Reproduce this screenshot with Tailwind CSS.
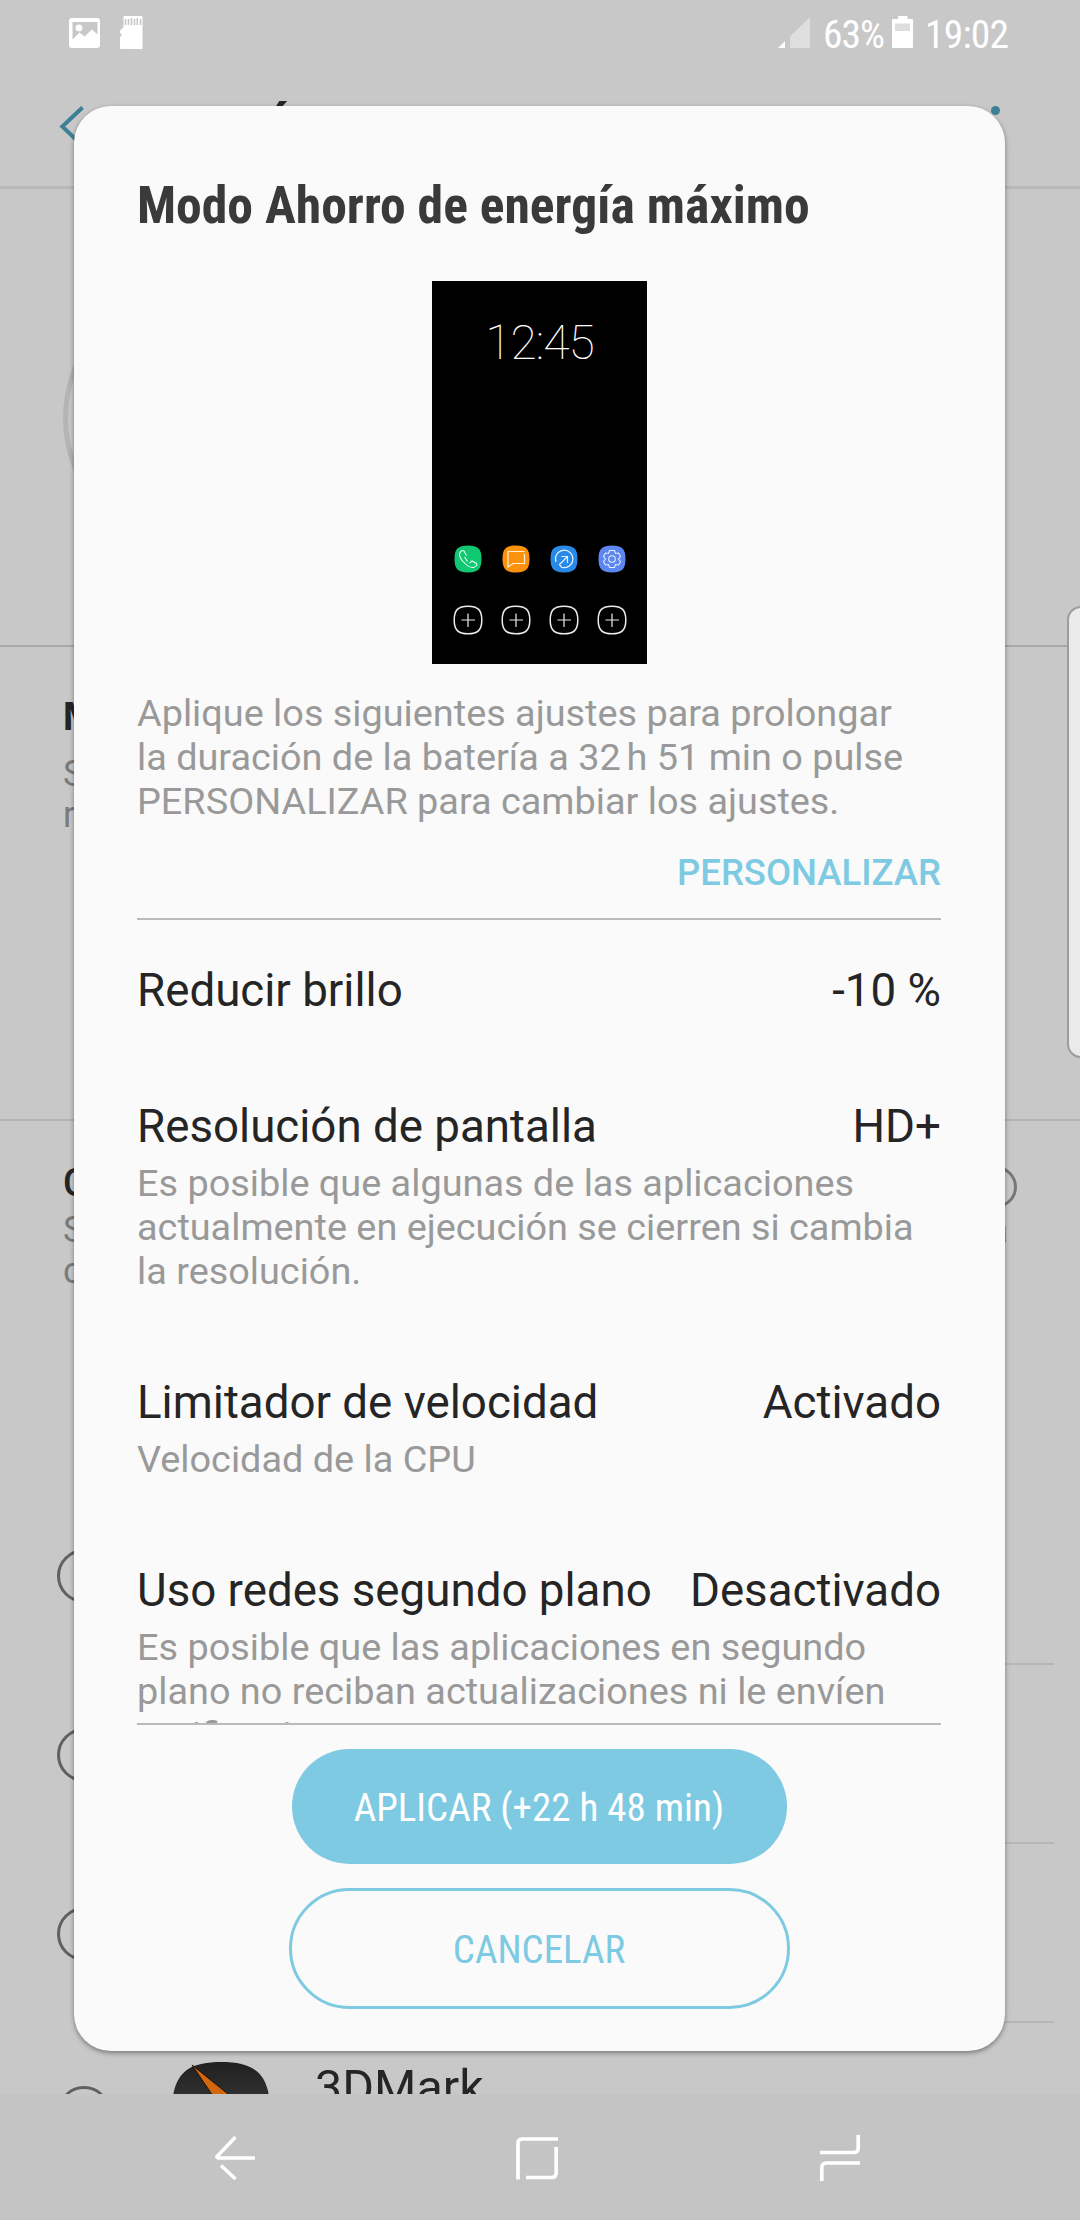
<!DOCTYPE html>
<html lang="es">
<head>
<meta charset="utf-8">
<title>Modo Ahorro de energía máximo</title>
<script src="https://cdn.jsdelivr.net/npm/@tailwindcss/browser@4"></script>
</head>
<body class="relative h-[2220px] w-[1080px] overflow-hidden bg-[#c8c8c8] font-['Roboto',sans-serif] text-[#252525]">

<!-- Settings screen behind the dialog -->
<div class="flex h-[2094px] flex-col overflow-hidden">
  <header class="flex h-[72px] shrink-0 items-start justify-between pl-[69px] pr-[71px]">
    <div class="flex items-start gap-[19px] pt-4">
      <svg class="mt-px h-8 w-8" viewBox="0 0 32 32"><path fill="#fff" fill-rule="evenodd" d="M3 1h25a3 3 0 0 1 3 3v24a3 3 0 0 1-3 3H3a3 3 0 0 1-3-3V4a3 3 0 0 1 3-3ZM3.500 5v17.500l7-7 5 4 7.500-7 5.500 5V5ZM10 7.500a3.400 3.400 0 1 1 0 6.800 3.400 3.400 0 0 1 0-6.800Z"/></svg>
      <svg class="h-[33px] w-[23px]" viewBox="0 0 23 33"><path fill="#fff" d="M4 0h17.500a1 1 0 0 1 1 1v31a1 1 0 0 1-1 1H1a1 1 0 0 1-1-1V21l1.500-1.500V18L0 17v-2.500L3.500 11V1Z"/><path stroke="#c8c8c8" stroke-width="1.600" d="M5.500 3v6M8.500 3v6M11.500 2v7M14.500 3v6M17.300 2v7M20.500 3v6"/></svg>
    </div>
    <div class="flex items-start pt-[11px] text-[39.500px] leading-[46px] text-white">
      <svg class="mr-[13px] mt-[5px] h-8 w-8" viewBox="0 0 32 32"><path fill="#fff" d="M0 32l7-7v7Z"/><path fill="#dedede" d="M12 32V20.500L32 1v31Z"/></svg>
      <span class="mt-px w-[61px] whitespace-nowrap font-['Roboto_Condensed','Roboto'] tracking-[-1px] font-stretch-condensed">63%</span>
      <svg class="ml-2 mt-[5px] h-8 w-[21px]" viewBox="0 0 21 32"><path fill="#fff" d="M6 0h9.500v3H20a1 1 0 0 1 1 1v27a1 1 0 0 1-1 1H1a1 1 0 0 1-1-1V4a1 1 0 0 1 1-1h5Z"/><path fill="#dedede" d="M3 7.500h15V15H3Z"/></svg>
      <span class="ml-[12px] mt-px w-[84px] whitespace-nowrap font-['Roboto_Condensed','Roboto'] tracking-[-0.8px] font-stretch-condensed">19:02</span>
    </div>
  </header>
  <div class="flex h-[117px] shrink-0 items-start border-b-[3px] border-[#b9b9b9] pl-[59px] pr-[80px] pt-[34px]">
    <svg class="h-10 w-7" viewBox="0 0 28 40"><path fill="none" stroke="#3d7f96" stroke-width="4" d="M23.500 1.500L3.300 20.500L23.500 39.700"/></svg>
    <span class="-mt-[5px] ml-[47px] font-['Roboto_Condensed','Roboto'] text-[51px] font-bold leading-[60px] font-stretch-condensed">BATERÍA</span>
    <span class="ml-auto h-[9px] w-[9px] rounded-full bg-[#3d7f96]"></span>
  </div>
  <section class="h-[458px] shrink-0 border-b-2 border-[#a8a8a8] pl-[63px] pt-[91px]">
    <div class="h-[276px] w-[276px] rounded-full border-[5px] border-[#b4b4b4]"></div>
  </section>
  <section class="h-[474px] shrink-0 border-b-2 border-[#b4b4b4] pl-[63px] pt-[45px]">
    <h2 class="text-[38px] font-bold leading-[50px]">M</h2>
    <p class="mt-3 text-[36px] leading-[41px] text-[#7b7b7b]">S<br>r</p>
  </section>
  <section class="h-[365px] shrink-0 pl-[63px] pt-[37px]">
    <div class="flex h-[50px] items-center justify-between pr-[63px]">
      <h2 class="text-[38px] font-medium leading-[50px]">C</h2>
      <span class="mt-2 h-[42px] w-[42px] rounded-full border-[3px] border-[#777]"></span>
    </div>
    <div class="mt-0.5 flex justify-between pr-[72px] text-[36px] leading-[41px] text-[#7b7b7b]"><span>S<br>c</span><span>a</span></div>
  </section>
  <section class="flex flex-col pl-[57px] pr-[26px]">
    <div class="flex h-[179px] items-center gap-[61px]"><span class="h-[54px] w-[54px] rounded-full border-[3px] border-[#606060]"></span><span class="h-full flex-1 border-b-2 border-[#b6b6b6]"></span></div>
    <div class="flex h-[179px] items-center gap-[61px]"><span class="h-[54px] w-[54px] rounded-full border-[3px] border-[#606060]"></span><span class="h-full flex-1 border-b-2 border-[#b6b6b6]"></span></div>
    <div class="flex h-[179px] items-center gap-[61px]"><span class="h-[54px] w-[54px] rounded-full border-[3px] border-[#606060]"></span><span class="h-full flex-1 border-b-2 border-[#b6b6b6]"></span></div>
    <div class="flex h-[179px] items-center">
      <span class="h-[54px] w-[54px] rounded-full border-[3px] border-[#606060]"></span>
      <svg class="-mt-[3px] ml-[61px] h-[98px] w-[98px]" viewBox="0 0 98 98"><defs><linearGradient id="g" x2="0" y2="1"><stop stop-color="#202020"/><stop offset=".4" stop-color="#333"/></linearGradient></defs><path fill="url(#g)" d="M49 0C83 0 98 12 98 49S83 98 49 98 0 86 0 49 15 0 49 0Z"/><path fill="#d3670f" stroke="#1b120c" d="M20 3L56 32L70 52L41 34Z"/></svg>
      <span class="-mt-[50px] ml-[45px] text-[48.500px] leading-[54px]">3DMark</span>
    </div>
  </section>
</div>

<!-- Edge panel handle -->
<div class="absolute left-[1067px] top-[606px] h-[452px] w-[40px] rounded-[14px] border-2 border-[#9c9c9c] bg-[#eaeaea]"></div>

<!-- Navigation bar -->
<nav class="flex h-[126px] items-start bg-[#c4c4c4] pl-[213px] pt-10">
  <svg class="h-12 w-12" viewBox="0 0 48 48" fill="none" stroke="#fff" stroke-width="3.500"><path d="M42 24H5Q2.500 23 5 21.500L22.500 3"/><path d="M8 31.500L22.500 45"/></svg>
  <svg class="ml-[252px] h-12 w-12" viewBox="0 0 48 48" fill="none" stroke="#fff" stroke-width="3.700"><path d="M5 45.500V9.500Q5 5 9.500 5H45"/><path d="M43.200 13V38.500Q43.200 43.500 38.500 43.500H13"/></svg>
  <svg class="ml-[257px] h-12 w-12" viewBox="0 0 48 48" fill="none" stroke="#fff" stroke-width="3.700"><path d="M2 18.500H35.500Q40.200 18.500 40.200 14V1"/><path d="M42 29H8.500Q3.800 29 3.800 34V47"/></svg>
</nav>

<!-- Dialog -->
<main class="absolute left-[74px] top-[106px] flex h-[1945px] w-[931px] flex-col rounded-[37px] bg-[#fafafa] pl-[63px] pr-16 pt-[70px] shadow-[0_2px_5px_rgba(0,0,0,0.4)]">
  <h1 class="whitespace-nowrap font-['Roboto_Condensed','Roboto'] text-[51.600px] font-bold leading-[60px] text-[#3a3a3a] font-stretch-condensed">Modo Ahorro de energía máximo</h1>
  <div class="ml-[295px] mt-[45px] flex h-[383px] w-[215px] flex-col bg-black pt-[34px]">
    <div class="text-center text-[48px] font-thin leading-[56px] tracking-[-1px] text-white">12:45</div>
    <div class="mt-[174px] flex justify-between px-[21.500px]">
      <svg class="h-[28px] w-[28px]" viewBox="0 0 28 28" fill="none"><path fill="#10c872" d="M14 .5C24 .5 27.500 4 27.500 14S24 27.500 14 27.500.5 24 .5 14 4 .5 14 .5Z"/><path stroke="#eafff4" stroke-width="1.100" d="M12.500 10.500L10 6Q8.500 4.500 6.500 7Q3.500 10 9 16.500Q15 23 19.500 22.500Q24 20.500 22.500 18.500L18 16L15.500 18M13.500 16.500L10.500 12"/></svg>
      <svg class="h-[28px] w-[28px]" viewBox="0 0 28 28" fill="none"><path fill="#fc920c" d="M14 .5C24 .5 27.500 4 27.500 14S24 27.500 14 27.500.5 24 .5 14 4 .5 14 .5Z"/><path stroke="#fff0d5" stroke-width="1.200" d="M22.500 9V18.500H11L6 22V6.500H22.500"/></svg>
      <svg class="h-[28px] w-[28px]" viewBox="0 0 28 28" fill="none"><path fill="#2889e6" d="M14 .5C24 .5 27.500 4 27.500 14S24 27.500 14 27.500.5 24 .5 14 4 .5 14 .5Z"/><path stroke="#e5f3ff" stroke-width="1.200" d="M6 17A8.700 8.700 0 1 1 11.500 22.200L9.500 19.500L17.500 11.500M11.500 11.500H17.500V18"/></svg>
      <svg class="h-[28px] w-[28px]" viewBox="0 0 28 28" fill="none"><path fill="#5d87f0" d="M14 .5C24 .5 27.500 4 27.500 14S24 27.500 14 27.500.5 24 .5 14 4 .5 14 .5Z"/><g stroke="#e5ecff" stroke-width="1.100"><circle cx="14" cy="14" r="3.300"/><path d="M11.500 5.500H16.500L17.500 8.500L20.500 8L22.500 11.500L20.500 14L22.500 16.500L20.500 20L17.500 19.500L16.500 22.500H11.500L10.500 19.500L7.500 20L5.500 16.500L7.500 14L5.500 11.500L7.500 8L10.500 8.500Z"/></g></svg>
    </div>
    <div class="mt-[32px] flex justify-between px-[20.500px]">
      <svg class="h-[30px] w-[30px]" viewBox="0 0 30 30" fill="none" stroke="#ececec"><path stroke-width="1.500" d="M15 1.200C25 1.200 28.800 5 28.800 15S25 28.800 15 28.800 1.200 25 1.200 15 5 1.200 15 1.200Z"/><path stroke-width="1.200" d="M15 8.500V22M8.500 15H22"/></svg>
      <svg class="h-[30px] w-[30px]" viewBox="0 0 30 30" fill="none" stroke="#ececec"><path stroke-width="1.500" d="M15 1.200C25 1.200 28.800 5 28.800 15S25 28.800 15 28.800 1.200 25 1.200 15 5 1.200 15 1.200Z"/><path stroke-width="1.200" d="M15 8.500V22M8.500 15H22"/></svg>
      <svg class="h-[30px] w-[30px]" viewBox="0 0 30 30" fill="none" stroke="#ececec"><path stroke-width="1.500" d="M15 1.200C25 1.200 28.800 5 28.800 15S25 28.800 15 28.800 1.200 25 1.200 15 5 1.200 15 1.200Z"/><path stroke-width="1.200" d="M15 8.500V22M8.500 15H22"/></svg>
      <svg class="h-[30px] w-[30px]" viewBox="0 0 30 30" fill="none" stroke="#ececec"><path stroke-width="1.500" d="M15 1.200C25 1.200 28.800 5 28.800 15S25 28.800 15 28.800 1.200 25 1.200 15 5 1.200 15 1.200Z"/><path stroke-width="1.200" d="M15 8.500V22M8.500 15H22"/></svg>
    </div>
  </div>
  <p class="mt-[27px] whitespace-nowrap text-[37.850px] leading-[44px] text-[#999]">Aplique los siguientes ajustes para prolongar<br>la duración de la batería a <span class="[word-spacing:-3.500px]">32 h</span> 51 min o pulse<br>PERSONALIZAR para cambiar los ajustes.</p>
  <button class="mt-7 self-end text-[36.500px] font-medium leading-[44px] text-[#7dcae2]">PERSONALIZAR</button>
  <div class="mt-[23px] h-[807px] shrink-0 overflow-hidden border-y-2 border-[#bababa] whitespace-nowrap">
    <div class="mt-11 flex justify-between text-[45.700px] leading-[54px]"><span>Reducir brillo</span><span>-10 %</span></div>
    <div class="mt-[82px] flex justify-between text-[45.700px] leading-[54px]"><span>Resolución de pantalla</span><span>HD+</span></div>
    <p class="mt-[7px] text-[37.850px] leading-[44px] text-[#999]">Es posible que algunas de las aplicaciones<br>actualmente en ejecución se cierren si cambia<br>la resolución.</p>
    <div class="mt-[83px] flex justify-between text-[45.700px] leading-[54px]"><span>Limitador de velocidad</span><span>Activado</span></div>
    <p class="mt-[7px] text-[37.850px] leading-[44px] text-[#999]">Velocidad de la CPU</p>
    <div class="mt-[83px] flex justify-between text-[45.700px] leading-[54px]"><span>Uso redes segundo plano</span><span>Desactivado</span></div>
    <p class="mt-[7px] text-[37.850px] leading-[44px] text-[#999]">Es posible que las aplicaciones en segundo<br>plano no reciban actualizaciones ni le envíen<br>notificaciones.</p>
  </div>
  <div class="mt-6 flex flex-col items-center gap-6 whitespace-nowrap font-['Roboto_Condensed','Roboto'] text-[39px] font-stretch-condensed">
    <button class="h-[115px] w-[495px] rounded-full bg-[#7dcae2] pt-1 text-white">APLICAR (+22 h 48 min)</button>
    <button class="h-[121px] w-[501px] rounded-full border-[3px] border-[#7dcae2] pt-1 text-[#7dcae2]">CANCELAR</button>
  </div>
</main>
</body>
</html>
